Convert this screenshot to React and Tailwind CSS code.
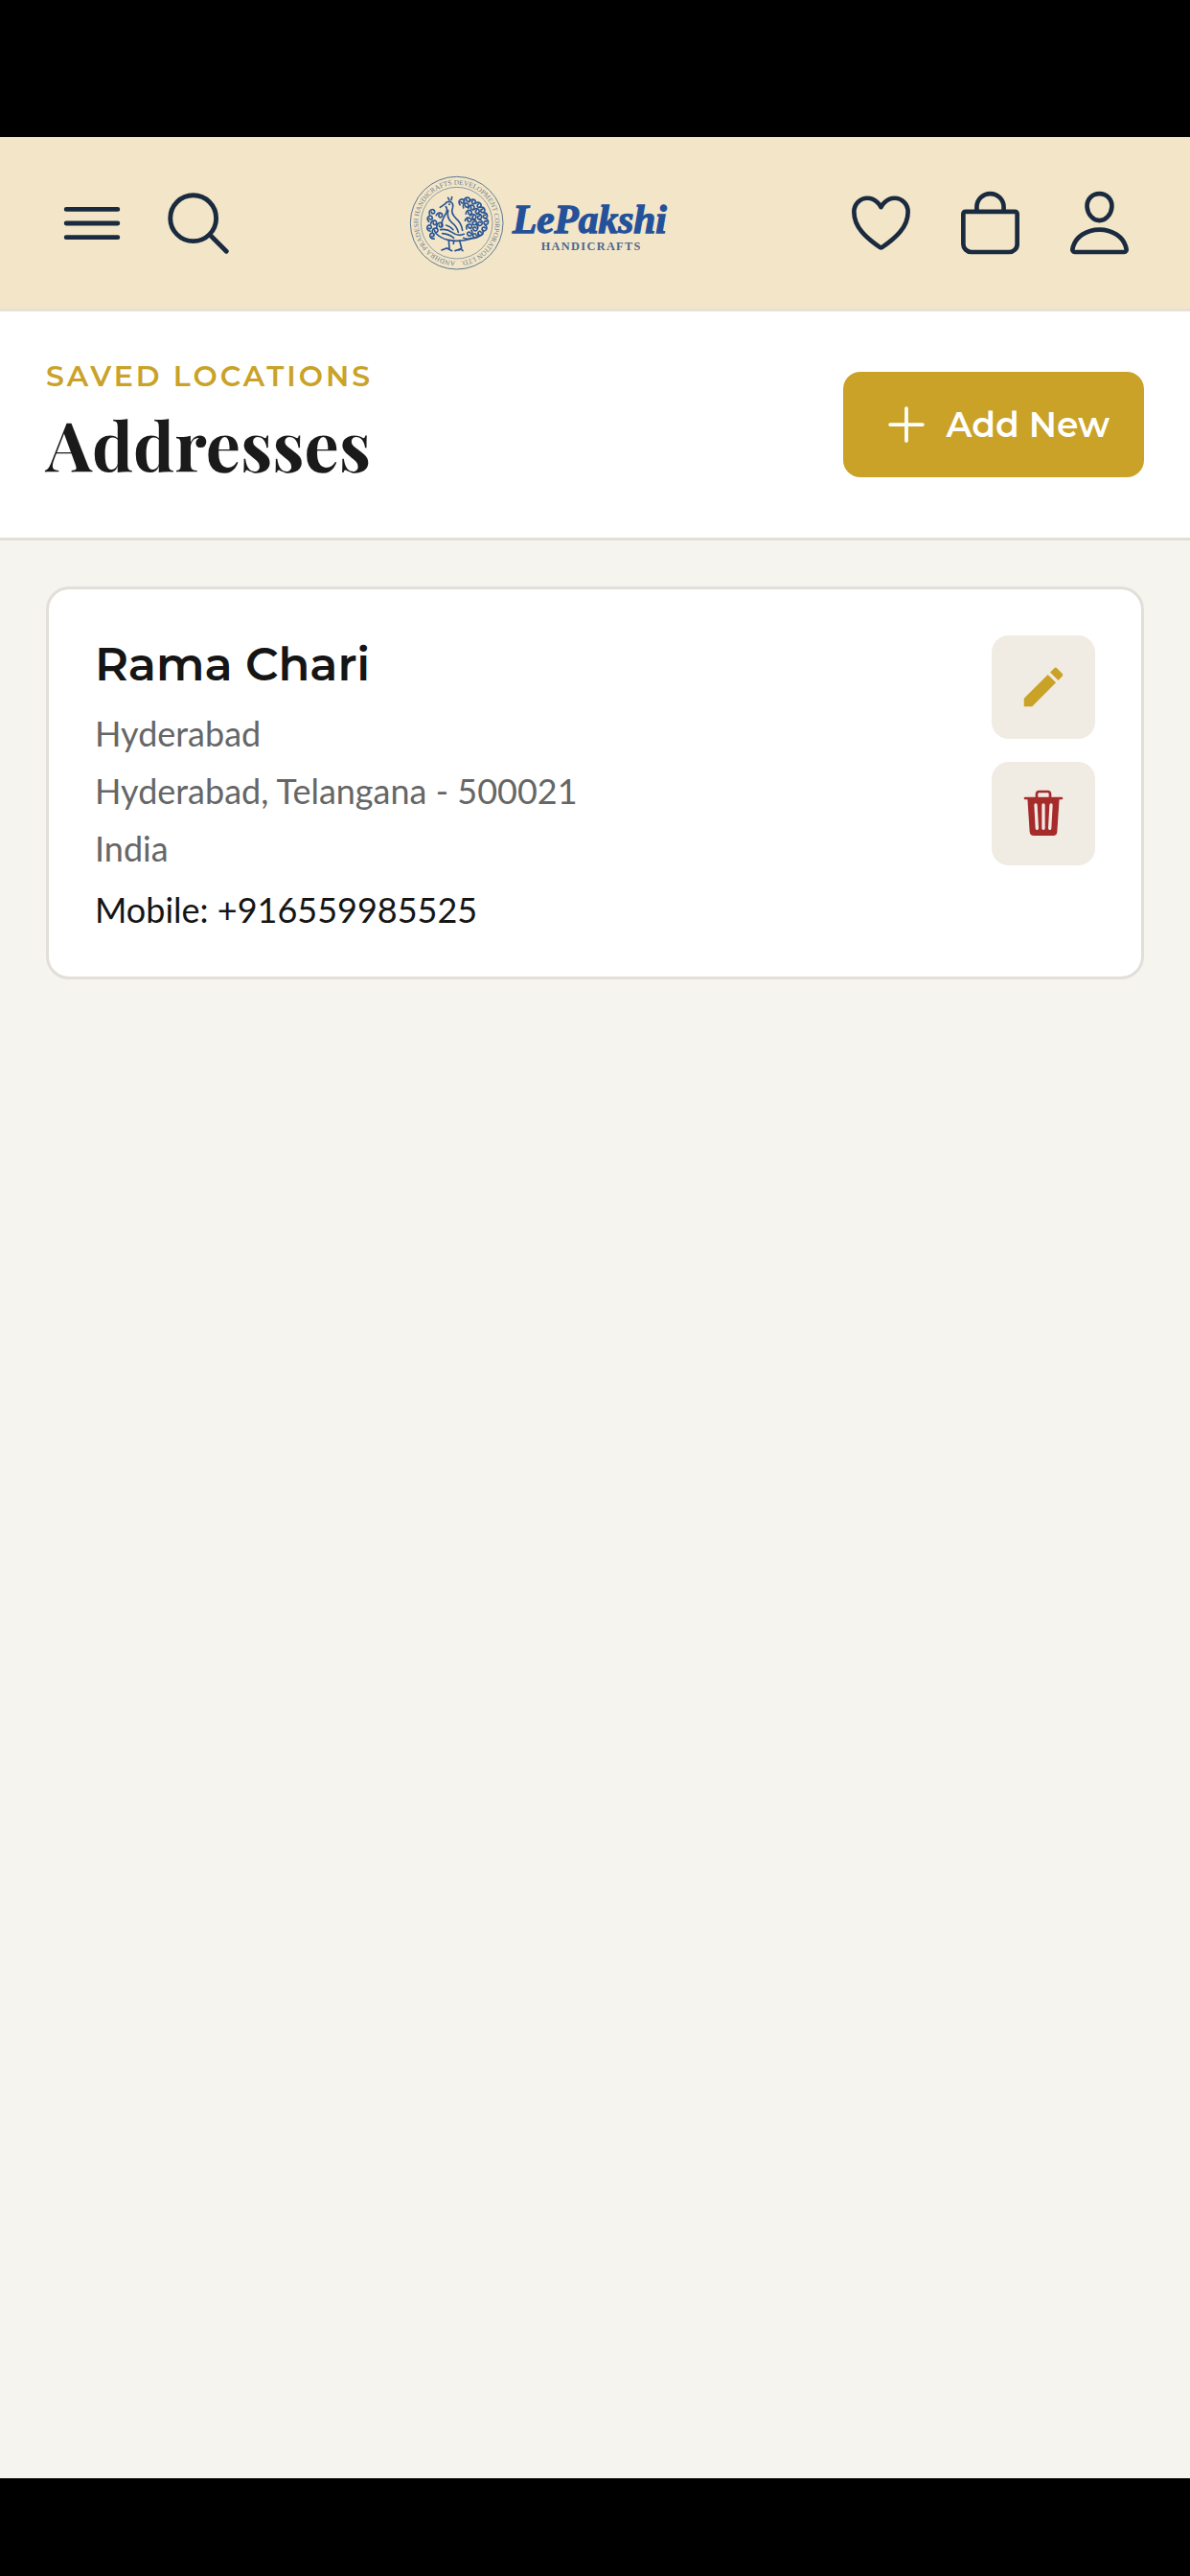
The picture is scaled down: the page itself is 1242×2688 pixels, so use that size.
import React from 'react';
import {
  IoAdd,
  IoBagOutline,
  IoHeartOutline,
  IoMenuOutline,
  IoPersonOutline,
  IoSearchOutline,
} from 'react-icons/io5';
import { MdEdit } from 'react-icons/md';

const addresses = [
  {
    id: 1,
    name: 'Rama Chari',
    lines: ['Hyderabad', 'Hyderabad, Telangana - 500021', 'India'],
    mobile: '+916559985525',
  },
];

// Feather curls of the peacock: [x, y, size, rotation]
const curls = [
  [122, 180, 8, 0], [115, 200, 8, -30], [128, 214, 8, 20], [113, 230, 8, -60],
  [132, 238, 8, 10], [122, 255, 8, -80], [146, 190, 8, 40], [146, 222, 9, 0],
  [214, 148, 8, -20], [232, 142, 8, 10], [250, 148, 8, 40], [268, 158, 8, 70],
  [280, 174, 8, 90], [288, 192, 8, 100], [291, 212, 8, 120], [286, 232, 8, 140],
  [274, 246, 8, 160], [228, 160, 8, 0], [246, 166, 8, 30], [262, 177, 8, 60],
  [270, 195, 8, 90], [272, 215, 8, 120], [258, 232, 8, 150], [238, 182, 8, 20],
  [252, 195, 8, 60], [254, 213, 8, 90], [238, 226, 8, 0], [236, 205, 8, 30],
  [240, 248, 8, 160], [258, 254, 8, 180],
];

const Logo = () => (
  <svg viewBox="50 60 825 310" className="w-[275px] shrink-0" role="img" aria-label="Lepakshi Handicrafts">
    <defs>
      <path id="ring" d="M199 335 A120 120 0 0 1 199 95 A120 120 0 0 1 199 335" />
    </defs>

    {/* Seal */}
    <g fill="none" stroke="#5b7590">
      <circle cx="199" cy="215" r="145" strokeWidth="3" />
      <circle cx="199" cy="215" r="112" strokeWidth="2" />
    </g>
    <text fill="#6d8292" fontSize="22" fontFamily="'Liberation Serif', serif">
      <textPath href="#ring" startOffset="4">ANDHRA PRADESH HANDICRAFTS DEVELOPMENT CORPORATION LTD.</textPath>
    </text>

    {/* Peacock */}
    <g fill="none" stroke="#2a5595" strokeWidth="5" strokeLinecap="round">
      {curls.map(([x, y, r, turn]) => (
        <g key={`${x}-${y}`} transform={`translate(${x} ${y}) rotate(${turn})`}>
          <path d={`M${-r} ${r} C${-r - 4} ${-r} ${r} ${-r - 4} ${r} 0 C${r} ${r} ${-3} ${r - 1} ${-2} 0`} />
        </g>
      ))}
      <path d="M147 166 L162 156 Q168 146 180 149 Q190 154 186 168 Q180 184 196 200 Q214 216 217 238" />
      <path d="M165 164 Q172 172 165 186 Q150 208 152 226" />
      <path d="M172 176 Q166 198 184 214 Q200 226 204 244" />
      <path d="M132 246 Q150 264 172 268 Q208 276 246 264 Q266 262 280 250" />
      <path d="M148 236 Q168 232 184 244 Q202 258 222 250" />
      <path d="M154 248 Q176 250 190 262 M166 222 Q180 226 188 236 M220 262 Q232 268 246 262" />
      <path d="M174 270 L176 296 M190 272 L189 280 M208 270 L214 294 L206 300" />
      <path d="M152 300 L168 294 L184 302 M194 302 L212 296 L218 302" />
      <path d="M176 144 L172 136 M182 143 L184 134" />
    </g>
    <circle cx="176" cy="157" r="3" fill="#2a5595" />

    {/* Wordmark */}
    <text
      x="374"
      y="247"
      fill="#24519a"
      stroke="#24519a"
      strokeWidth="4"
      fontSize="124"
      fontWeight="700"
      fontStyle="italic"
      fontFamily="'Liberation Serif', serif"
    >
      LePakshi
    </text>
    <text x="463" y="299" fill="#4a6690" fontSize="37" fontWeight="700" letterSpacing="4" fontFamily="'Liberation Serif', serif">
      HANDICRAFTS
    </text>
  </svg>
);

const TrashIcon = () => (
  <svg viewBox="0 0 162 162" className="size-[54px]" fill="currentColor" aria-hidden="true">
    <path d="M60 31 V20 Q60 12 68 12 H94 Q102 12 102 20 V31" fill="none" stroke="currentColor" strokeWidth="8" />
    <path d="M24 33 H138" stroke="currentColor" strokeWidth="8" strokeLinecap="round" />
    <path d="M31 33 L38 138 Q39 150 51 150 H112 Q123 150 124 138 L131 33 Z" />
    <path d="M57 54 L61 127 M81 54 V127 M105 54 L101 127" stroke="#f0ebe3" strokeWidth="10" strokeLinecap="round" />
  </svg>
);

const Header = () => (
  <header className="flex items-center justify-between border-b-3 border-[#e8e0d5] bg-[#f3e6c8] px-[57px] py-[38px] text-[#1a2b40]">
    <div className="flex items-center gap-[33px]">
      <button aria-label="Menu">
        <IoMenuOutline className="size-[78px]" />
      </button>
      <button aria-label="Search">
        <IoSearchOutline className="size-[78px]" />
      </button>
    </div>
    <Logo />
    <div className="flex items-center gap-[39px]">
      <button aria-label="Wishlist">
        <IoHeartOutline className="size-[75px]" />
      </button>
      <button aria-label="Bag">
        <IoBagOutline className="size-[75px]" />
      </button>
      <button aria-label="Account">
        <IoPersonOutline className="size-[75px]" />
      </button>
    </div>
  </header>
);

const AddressCard = ({ address }) => (
  <article className="flex items-start justify-between rounded-3xl border-3 border-[#e2dfd9] bg-white p-12">
    <div className="font-[Lato,sans-serif] text-4xl/[60px] text-[#666666]">
      <h2 className="mb-3 font-[Montserrat,Inter,sans-serif] text-5xl/[60px] font-semibold text-[#151515]">
        {address.name}
      </h2>
      {address.lines.map((line) => (
        <p key={line}>{line}</p>
      ))}
      <p className="mt-3 leading-[44px] text-[#151515]">Mobile: {address.mobile}</p>
    </div>
    <div className="flex flex-col gap-6">
      <button aria-label="Edit address" className="flex size-[108px] items-center justify-center rounded-[18px] bg-[#f0ebe3] text-[#c9a227]">
        <MdEdit className="size-[54px]" />
      </button>
      <button aria-label="Delete address" className="flex size-[108px] items-center justify-center rounded-[18px] bg-[#f0ebe3] text-[#a62b2b]">
        <TrashIcon />
      </button>
    </div>
  </article>
);

const App = () => {
  return (
    <div className="flex min-h-screen flex-col border-t-[143px] border-b-[102px] border-black bg-[#f6f4ee]">
      <Header />

      <section className="flex items-center justify-between border-b-3 border-[#e2dfd9] bg-white px-12 py-[49px]">
        <div>
          <p className="font-[Montserrat,Inter,sans-serif] text-[30px]/[38px] font-semibold tracking-[3px] text-[#c9a227] uppercase">
            Saved Locations
          </p>
          <h1 className="font-['Playfair_Display','Liberation_Serif',serif] text-7xl/[100px] font-bold text-[#1a1a1a]">
            Addresses
          </h1>
        </div>
        <button className="flex items-center gap-3 rounded-[18px] bg-[#c9a227] px-9 py-[25px] font-[Montserrat,Inter,sans-serif] text-4xl/[60px] font-semibold text-white">
          <IoAdd className="size-[60px]" />
          Add New
        </button>
      </section>

      <main className="flex flex-col gap-6 p-12">
        {addresses.map((address) => (
          <AddressCard key={address.id} address={address} />
        ))}
      </main>
    </div>
  );
};

export default App;
